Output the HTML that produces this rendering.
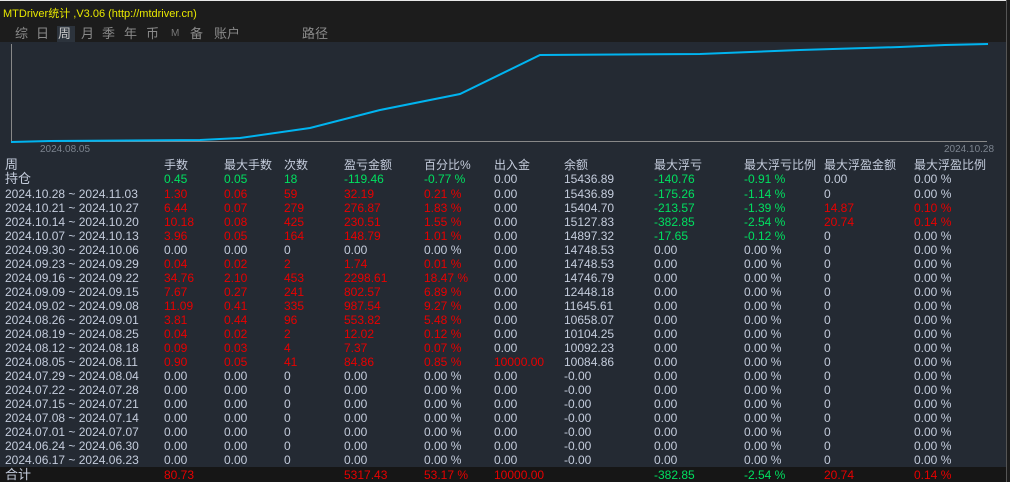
<!DOCTYPE html>
<html><head><meta charset="utf-8"><style>
*{margin:0;padding:0;box-sizing:border-box}
body{width:1010px;height:482px;background:#242a33;overflow:hidden;position:relative;font-family:"Liberation Sans","Noto Sans CJK SC",sans-serif;font-size:12px;color:#c4ccdc}
#top{position:absolute;left:0;top:0;width:1010px;height:42px;background:#1c1c1c;border-top:1px solid #e8e8e8}
#title{position:absolute;left:3px;top:4px;color:#e8e800;font-size:11px}
.tab{position:absolute;top:25px;height:16px;line-height:16px;font-size:13px;color:#8a8a8a}
#sel{position:absolute;left:57px;top:25px;width:18px;height:16px;background:#2c333c}
#rb{position:absolute;left:1006px;top:0;width:4px;height:482px;background:#1c1c1c;border-left:1px solid #555}
.row{position:absolute;left:0;height:14px;line-height:14px;white-space:nowrap;width:1006px}
.row span{position:absolute;top:0}
.c0{left:5px}.c1{left:164px}.c2{left:224px}.c3{left:284px}.c4{left:344px}.c5{left:424px}.c6{left:494px}.c7{left:564px}.c8{left:654px}.c9{left:744px}.c10{left:824px}.c11{left:914px}
.r{color:#e80000}.g{color:#00e060}
.row .lb{font-size:13px}
#tot{position:absolute;left:0;top:467px;width:1006px;height:15px;background:#161616}
</style></head><body>
<div id="top">
<div id="title">MTDriver统计 ,V3.06 (http://mtdriver.cn)</div>
<div id="sel"></div>
<span class="tab" style="left:15px">综</span>
<span class="tab" style="left:36px">日</span>
<span class="tab" style="left:58px;color:#c8c8c8">周</span>
<span class="tab" style="left:81px">月</span>
<span class="tab" style="left:102px">季</span>
<span class="tab" style="left:124px">年</span>
<span class="tab" style="left:146px">币</span>
<span class="tab" style="left:171px;font-size:10px;color:#777">M</span>
<span class="tab" style="left:190px">备</span>
<span class="tab" style="left:214px">账户</span>
<span class="tab" style="left:302px">路径</span>
</div>
<svg style="position:absolute;left:0;top:42px" width="1006" height="115">
<line x1="11.5" y1="2" x2="11.5" y2="99" stroke="#888" stroke-width="1"/>
<line x1="11" y1="99.5" x2="987" y2="99.5" stroke="#888" stroke-width="1"/>
<polyline fill="none" stroke="#00b4f0" stroke-width="2" points="11,100 50,99 200,98 240,96 310,86 380,68 460,52 540,13 700,12 800,8 900,5 945,3 988,2"/>
<text x="40" y="110" fill="#7c848f" font-size="10" font-family="Liberation Sans">2024.08.05</text>
<text x="944" y="110" fill="#7c848f" font-size="10" font-family="Liberation Sans">2024.10.28</text>
</svg>
<div id="tot"></div>
<div class="row" style="top:158px"><span class="c0 lb">周</span><span class="c1">手数</span><span class="c2">最大手数</span><span class="c3">次数</span><span class="c4">盈亏金额</span><span class="c5">百分比%</span><span class="c6">出入金</span><span class="c7">余额</span><span class="c8">最大浮亏</span><span class="c9">最大浮亏比例</span><span class="c10">最大浮盈金额</span><span class="c11">最大浮盈比例</span></div>
<div class="row" style="top:172px"><span class="c0 lb">持仓</span><span class="c1 g">0.45</span><span class="c2 g">0.05</span><span class="c3 g">18</span><span class="c4 g">-119.46</span><span class="c5 g">-0.77 %</span><span class="c6">0.00</span><span class="c7">15436.89</span><span class="c8 g">-140.76</span><span class="c9 g">-0.91 %</span><span class="c10">0.00</span><span class="c11">0.00 %</span></div>
<div class="row" style="top:187px"><span class="c0">2024.10.28 ~ 2024.11.03</span><span class="c1 r">1.30</span><span class="c2 r">0.06</span><span class="c3 r">59</span><span class="c4 r">32.19</span><span class="c5 r">0.21 %</span><span class="c6">0.00</span><span class="c7">15436.89</span><span class="c8 g">-175.26</span><span class="c9 g">-1.14 %</span><span class="c10">0</span><span class="c11">0.00 %</span></div>
<div class="row" style="top:201px"><span class="c0">2024.10.21 ~ 2024.10.27</span><span class="c1 r">6.44</span><span class="c2 r">0.07</span><span class="c3 r">279</span><span class="c4 r">276.87</span><span class="c5 r">1.83 %</span><span class="c6">0.00</span><span class="c7">15404.70</span><span class="c8 g">-213.57</span><span class="c9 g">-1.39 %</span><span class="c10 r">14.87</span><span class="c11 r">0.10 %</span></div>
<div class="row" style="top:215px"><span class="c0">2024.10.14 ~ 2024.10.20</span><span class="c1 r">10.18</span><span class="c2 r">0.08</span><span class="c3 r">425</span><span class="c4 r">230.51</span><span class="c5 r">1.55 %</span><span class="c6">0.00</span><span class="c7">15127.83</span><span class="c8 g">-382.85</span><span class="c9 g">-2.54 %</span><span class="c10 r">20.74</span><span class="c11 r">0.14 %</span></div>
<div class="row" style="top:229px"><span class="c0">2024.10.07 ~ 2024.10.13</span><span class="c1 r">3.96</span><span class="c2 r">0.05</span><span class="c3 r">164</span><span class="c4 r">148.79</span><span class="c5 r">1.01 %</span><span class="c6">0.00</span><span class="c7">14897.32</span><span class="c8 g">-17.65</span><span class="c9 g">-0.12 %</span><span class="c10">0</span><span class="c11">0.00 %</span></div>
<div class="row" style="top:243px"><span class="c0">2024.09.30 ~ 2024.10.06</span><span class="c1">0.00</span><span class="c2">0.00</span><span class="c3">0</span><span class="c4">0.00</span><span class="c5">0.00 %</span><span class="c6">0.00</span><span class="c7">14748.53</span><span class="c8">0.00</span><span class="c9">0.00 %</span><span class="c10">0</span><span class="c11">0.00 %</span></div>
<div class="row" style="top:257px"><span class="c0">2024.09.23 ~ 2024.09.29</span><span class="c1 r">0.04</span><span class="c2 r">0.02</span><span class="c3 r">2</span><span class="c4 r">1.74</span><span class="c5 r">0.01 %</span><span class="c6">0.00</span><span class="c7">14748.53</span><span class="c8">0.00</span><span class="c9">0.00 %</span><span class="c10">0</span><span class="c11">0.00 %</span></div>
<div class="row" style="top:271px"><span class="c0">2024.09.16 ~ 2024.09.22</span><span class="c1 r">34.76</span><span class="c2 r">2.10</span><span class="c3 r">453</span><span class="c4 r">2298.61</span><span class="c5 r">18.47 %</span><span class="c6">0.00</span><span class="c7">14746.79</span><span class="c8">0.00</span><span class="c9">0.00 %</span><span class="c10">0</span><span class="c11">0.00 %</span></div>
<div class="row" style="top:285px"><span class="c0">2024.09.09 ~ 2024.09.15</span><span class="c1 r">7.67</span><span class="c2 r">0.27</span><span class="c3 r">241</span><span class="c4 r">802.57</span><span class="c5 r">6.89 %</span><span class="c6">0.00</span><span class="c7">12448.18</span><span class="c8">0.00</span><span class="c9">0.00 %</span><span class="c10">0</span><span class="c11">0.00 %</span></div>
<div class="row" style="top:299px"><span class="c0">2024.09.02 ~ 2024.09.08</span><span class="c1 r">11.09</span><span class="c2 r">0.41</span><span class="c3 r">335</span><span class="c4 r">987.54</span><span class="c5 r">9.27 %</span><span class="c6">0.00</span><span class="c7">11645.61</span><span class="c8">0.00</span><span class="c9">0.00 %</span><span class="c10">0</span><span class="c11">0.00 %</span></div>
<div class="row" style="top:313px"><span class="c0">2024.08.26 ~ 2024.09.01</span><span class="c1 r">3.81</span><span class="c2 r">0.44</span><span class="c3 r">96</span><span class="c4 r">553.82</span><span class="c5 r">5.48 %</span><span class="c6">0.00</span><span class="c7">10658.07</span><span class="c8">0.00</span><span class="c9">0.00 %</span><span class="c10">0</span><span class="c11">0.00 %</span></div>
<div class="row" style="top:327px"><span class="c0">2024.08.19 ~ 2024.08.25</span><span class="c1 r">0.04</span><span class="c2 r">0.02</span><span class="c3 r">2</span><span class="c4 r">12.02</span><span class="c5 r">0.12 %</span><span class="c6">0.00</span><span class="c7">10104.25</span><span class="c8">0.00</span><span class="c9">0.00 %</span><span class="c10">0</span><span class="c11">0.00 %</span></div>
<div class="row" style="top:341px"><span class="c0">2024.08.12 ~ 2024.08.18</span><span class="c1 r">0.09</span><span class="c2 r">0.03</span><span class="c3 r">4</span><span class="c4 r">7.37</span><span class="c5 r">0.07 %</span><span class="c6">0.00</span><span class="c7">10092.23</span><span class="c8">0.00</span><span class="c9">0.00 %</span><span class="c10">0</span><span class="c11">0.00 %</span></div>
<div class="row" style="top:355px"><span class="c0">2024.08.05 ~ 2024.08.11</span><span class="c1 r">0.90</span><span class="c2 r">0.05</span><span class="c3 r">41</span><span class="c4 r">84.86</span><span class="c5 r">0.85 %</span><span class="c6 r">10000.00</span><span class="c7">10084.86</span><span class="c8">0.00</span><span class="c9">0.00 %</span><span class="c10">0</span><span class="c11">0.00 %</span></div>
<div class="row" style="top:369px"><span class="c0">2024.07.29 ~ 2024.08.04</span><span class="c1">0.00</span><span class="c2">0.00</span><span class="c3">0</span><span class="c4">0.00</span><span class="c5">0.00 %</span><span class="c6">0.00</span><span class="c7">-0.00</span><span class="c8">0.00</span><span class="c9">0.00 %</span><span class="c10">0</span><span class="c11">0.00 %</span></div>
<div class="row" style="top:383px"><span class="c0">2024.07.22 ~ 2024.07.28</span><span class="c1">0.00</span><span class="c2">0.00</span><span class="c3">0</span><span class="c4">0.00</span><span class="c5">0.00 %</span><span class="c6">0.00</span><span class="c7">-0.00</span><span class="c8">0.00</span><span class="c9">0.00 %</span><span class="c10">0</span><span class="c11">0.00 %</span></div>
<div class="row" style="top:397px"><span class="c0">2024.07.15 ~ 2024.07.21</span><span class="c1">0.00</span><span class="c2">0.00</span><span class="c3">0</span><span class="c4">0.00</span><span class="c5">0.00 %</span><span class="c6">0.00</span><span class="c7">-0.00</span><span class="c8">0.00</span><span class="c9">0.00 %</span><span class="c10">0</span><span class="c11">0.00 %</span></div>
<div class="row" style="top:411px"><span class="c0">2024.07.08 ~ 2024.07.14</span><span class="c1">0.00</span><span class="c2">0.00</span><span class="c3">0</span><span class="c4">0.00</span><span class="c5">0.00 %</span><span class="c6">0.00</span><span class="c7">-0.00</span><span class="c8">0.00</span><span class="c9">0.00 %</span><span class="c10">0</span><span class="c11">0.00 %</span></div>
<div class="row" style="top:425px"><span class="c0">2024.07.01 ~ 2024.07.07</span><span class="c1">0.00</span><span class="c2">0.00</span><span class="c3">0</span><span class="c4">0.00</span><span class="c5">0.00 %</span><span class="c6">0.00</span><span class="c7">-0.00</span><span class="c8">0.00</span><span class="c9">0.00 %</span><span class="c10">0</span><span class="c11">0.00 %</span></div>
<div class="row" style="top:439px"><span class="c0">2024.06.24 ~ 2024.06.30</span><span class="c1">0.00</span><span class="c2">0.00</span><span class="c3">0</span><span class="c4">0.00</span><span class="c5">0.00 %</span><span class="c6">0.00</span><span class="c7">-0.00</span><span class="c8">0.00</span><span class="c9">0.00 %</span><span class="c10">0</span><span class="c11">0.00 %</span></div>
<div class="row" style="top:453px"><span class="c0">2024.06.17 ~ 2024.06.23</span><span class="c1">0.00</span><span class="c2">0.00</span><span class="c3">0</span><span class="c4">0.00</span><span class="c5">0.00 %</span><span class="c6">0.00</span><span class="c7">-0.00</span><span class="c8">0.00</span><span class="c9">0.00 %</span><span class="c10">0</span><span class="c11">0.00 %</span></div>
<div class="row" style="top:468px"><span class="c0 lb">合计</span><span class="c1 r">80.73</span><span class="c4 r">5317.43</span><span class="c5 r">53.17 %</span><span class="c6 r">10000.00</span><span class="c8 g">-382.85</span><span class="c9 g">-2.54 %</span><span class="c10 r">20.74</span><span class="c11 r">0.14 %</span></div>
<div id="rb"></div>
</body></html>
